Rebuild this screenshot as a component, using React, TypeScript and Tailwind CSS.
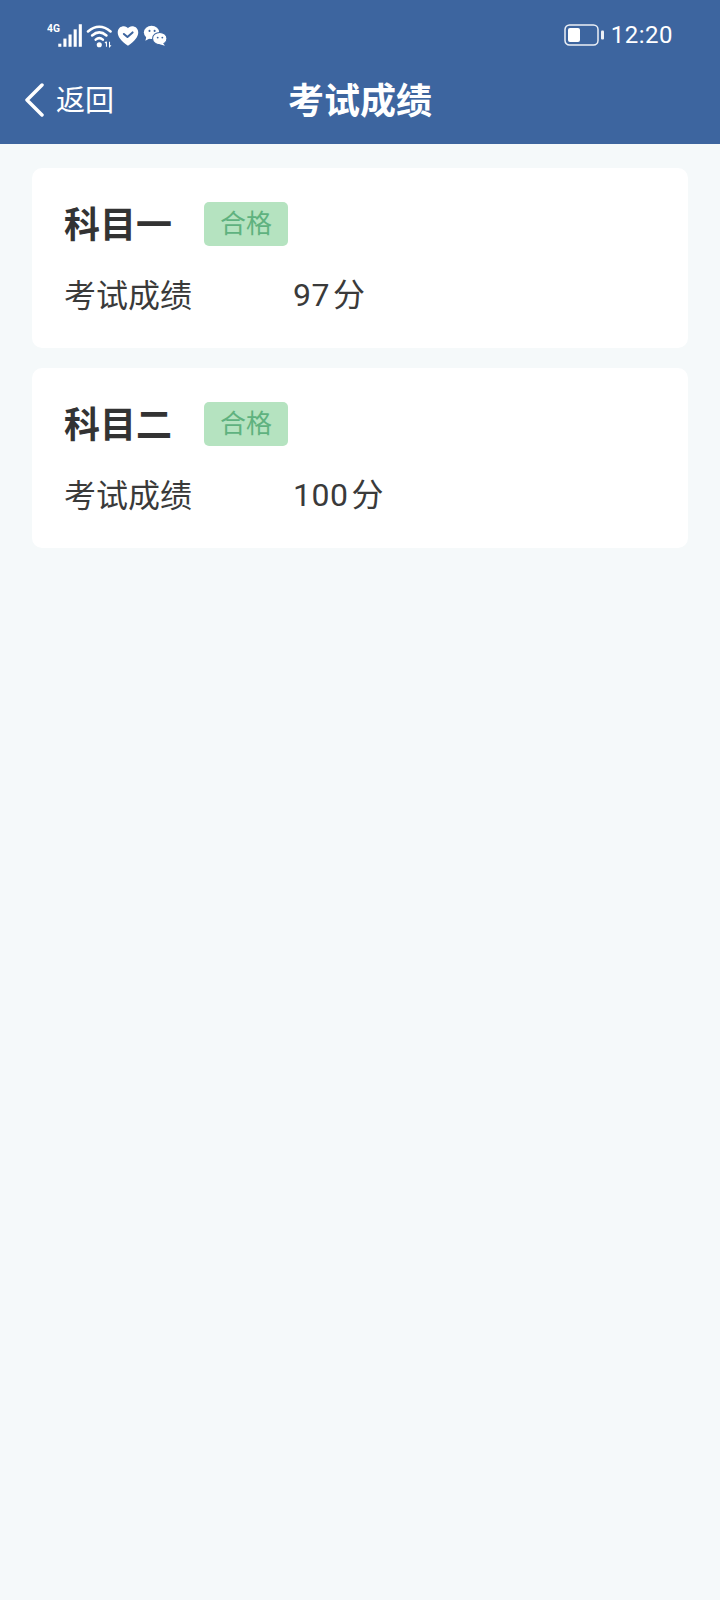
import React from 'react';

const cjk = "font-['Roboto','Noto_Sans_CJK_SC',sans-serif]";

const StatusLeft = () => (
  <svg width="123" height="25" viewBox="0 0 120 24" fill="none" className="text-white">
    <text x="0" y="9" fontSize="10" fontWeight="700" fontFamily="Roboto, sans-serif" fill="currentColor">4G</text>
    {[[11, 20, 3], [16, 15, 8], [21, 11, 12], [26, 6, 17], [31, 1, 22]].map(([x, y, h]) => (
      <rect key={x} x={x} y={y} width="3" height={h} fill="currentColor" />
    ))}
    <g stroke="currentColor" strokeWidth="2.500" strokeLinecap="round">
      <path d="M40 8 Q51 -1 62 8" />
      <path d="M44 12 Q51 6 58 12" />
      <path d="M47.500 16 Q51 13 54.500 16" />
    </g>
    <circle cx="51" cy="21" r="2.500" fill="currentColor" />
    <path d="M58 18v5M56.500 19.500 58 18M61 18v5l1.500 -1.500" stroke="currentColor" strokeWidth="1" />
    <path d="M79 22 C72 17 69 13 69 9 C69 5 72 3 75 3 C77 3 78.300 4 79 5 C79.700 4 81 3 83 3 C86 3 89 5 89 9 C89 13 86 17 79 22Z" fill="currentColor" />
    <path d="M75 10.500 L78.500 13.500 L83.500 9" stroke="#3d659f" strokeWidth="2" strokeLinecap="round" strokeLinejoin="round" />
    <ellipse cx="102" cy="9" rx="7.500" ry="6.500" fill="currentColor" />
    <path d="M97 13 L96 17 L100 15Z" fill="currentColor" />
    <ellipse cx="110" cy="15" rx="7" ry="6" fill="currentColor" stroke="#3d659f" strokeWidth="1" />
    <path d="M113 19 L115 22 L110 20.500Z" fill="currentColor" />
    <circle cx="100" cy="7.500" r="1" fill="#3d659f" />
    <circle cx="105" cy="7.500" r="1" fill="#3d659f" />
    <circle cx="108" cy="14" r="0.900" fill="#3d659f" />
    <circle cx="112.500" cy="14" r="0.900" fill="#3d659f" />
  </svg>
);

const Battery = () => (
  <svg width="41" height="22" viewBox="0 0 41 22" fill="none">
    <rect x="1" y="1" width="33" height="20" rx="4.500" stroke="white" strokeWidth="1.500" opacity="0.9" />
    <rect x="4" y="4" width="12" height="14" rx="2" fill="white" />
    <rect x="37" y="6.500" width="3" height="9" rx="1" fill="white" opacity="0.9" />
  </svg>
);

const results = [
  { name: '科目一', score: '97' },
  { name: '科目二', score: '100' },
];

const ResultCard = ({ name, score }: { name: string; score: string }) => (
  <div className="bg-white rounded-[10px] h-[180px] pl-[32px] pt-[34px]">
    <div className="flex items-center h-[44px]">
      <span className="w-[140px] pt-[4px] text-[36px] leading-[48px] font-bold text-[#333333]">{name}</span>
      <span className="w-[84px] h-[44px] rounded-[5px] bg-[#b5e3c0] text-[#5fb27f] text-[26px] leading-[44px] text-center">合格</span>
    </div>
    <div className="flex items-center mt-[25px] text-[32px] leading-[46px] text-[#3a3a3a]">
      <span className="w-[229px] pt-[2px] text-[32px]">考试成绩</span>
      <span className="tracking-[0.5px]">{score}<span className="ml-[3px]">分</span></span>
    </div>
  </div>
);

const App = () => {
  return (
    <div className={`w-[720px] h-[1600px] bg-[#f5f9fa] ${cjk}`}>
      <header className="h-[144px] bg-[#3d659f] text-white flex flex-col">
        <div className="h-[70px] flex items-center justify-between pl-[47px] pr-[47px]">
          <StatusLeft />
          <div className="flex items-center gap-[6px]">
            <Battery />
            <span className="text-[24px] leading-[30px] tracking-[0.5px] text-white">12:20</span>
          </div>
        </div>
        <div className="relative flex-1 flex items-center pl-[24px] pb-[14px]">
          <svg width="20" height="34" viewBox="0 0 20 34" fill="none">
            <path d="M18 2 L3 17 L18 32" stroke="white" strokeWidth="3.500" strokeLinecap="round" strokeLinejoin="round" />
          </svg>
          <span className="ml-[12px] text-[29px] leading-[40px] pt-[2px]">返回</span>
          <h1 className="absolute left-0 right-0 top-[9px] text-center text-[36px] leading-[46px] font-bold">考试成绩</h1>
        </div>
      </header>
      <main className="px-[32px] pt-[24px] flex flex-col gap-[20px]">
        {results.map((r) => (
          <ResultCard key={r.name} name={r.name} score={r.score} />
        ))}
      </main>
    </div>
  );
};

export default App;
